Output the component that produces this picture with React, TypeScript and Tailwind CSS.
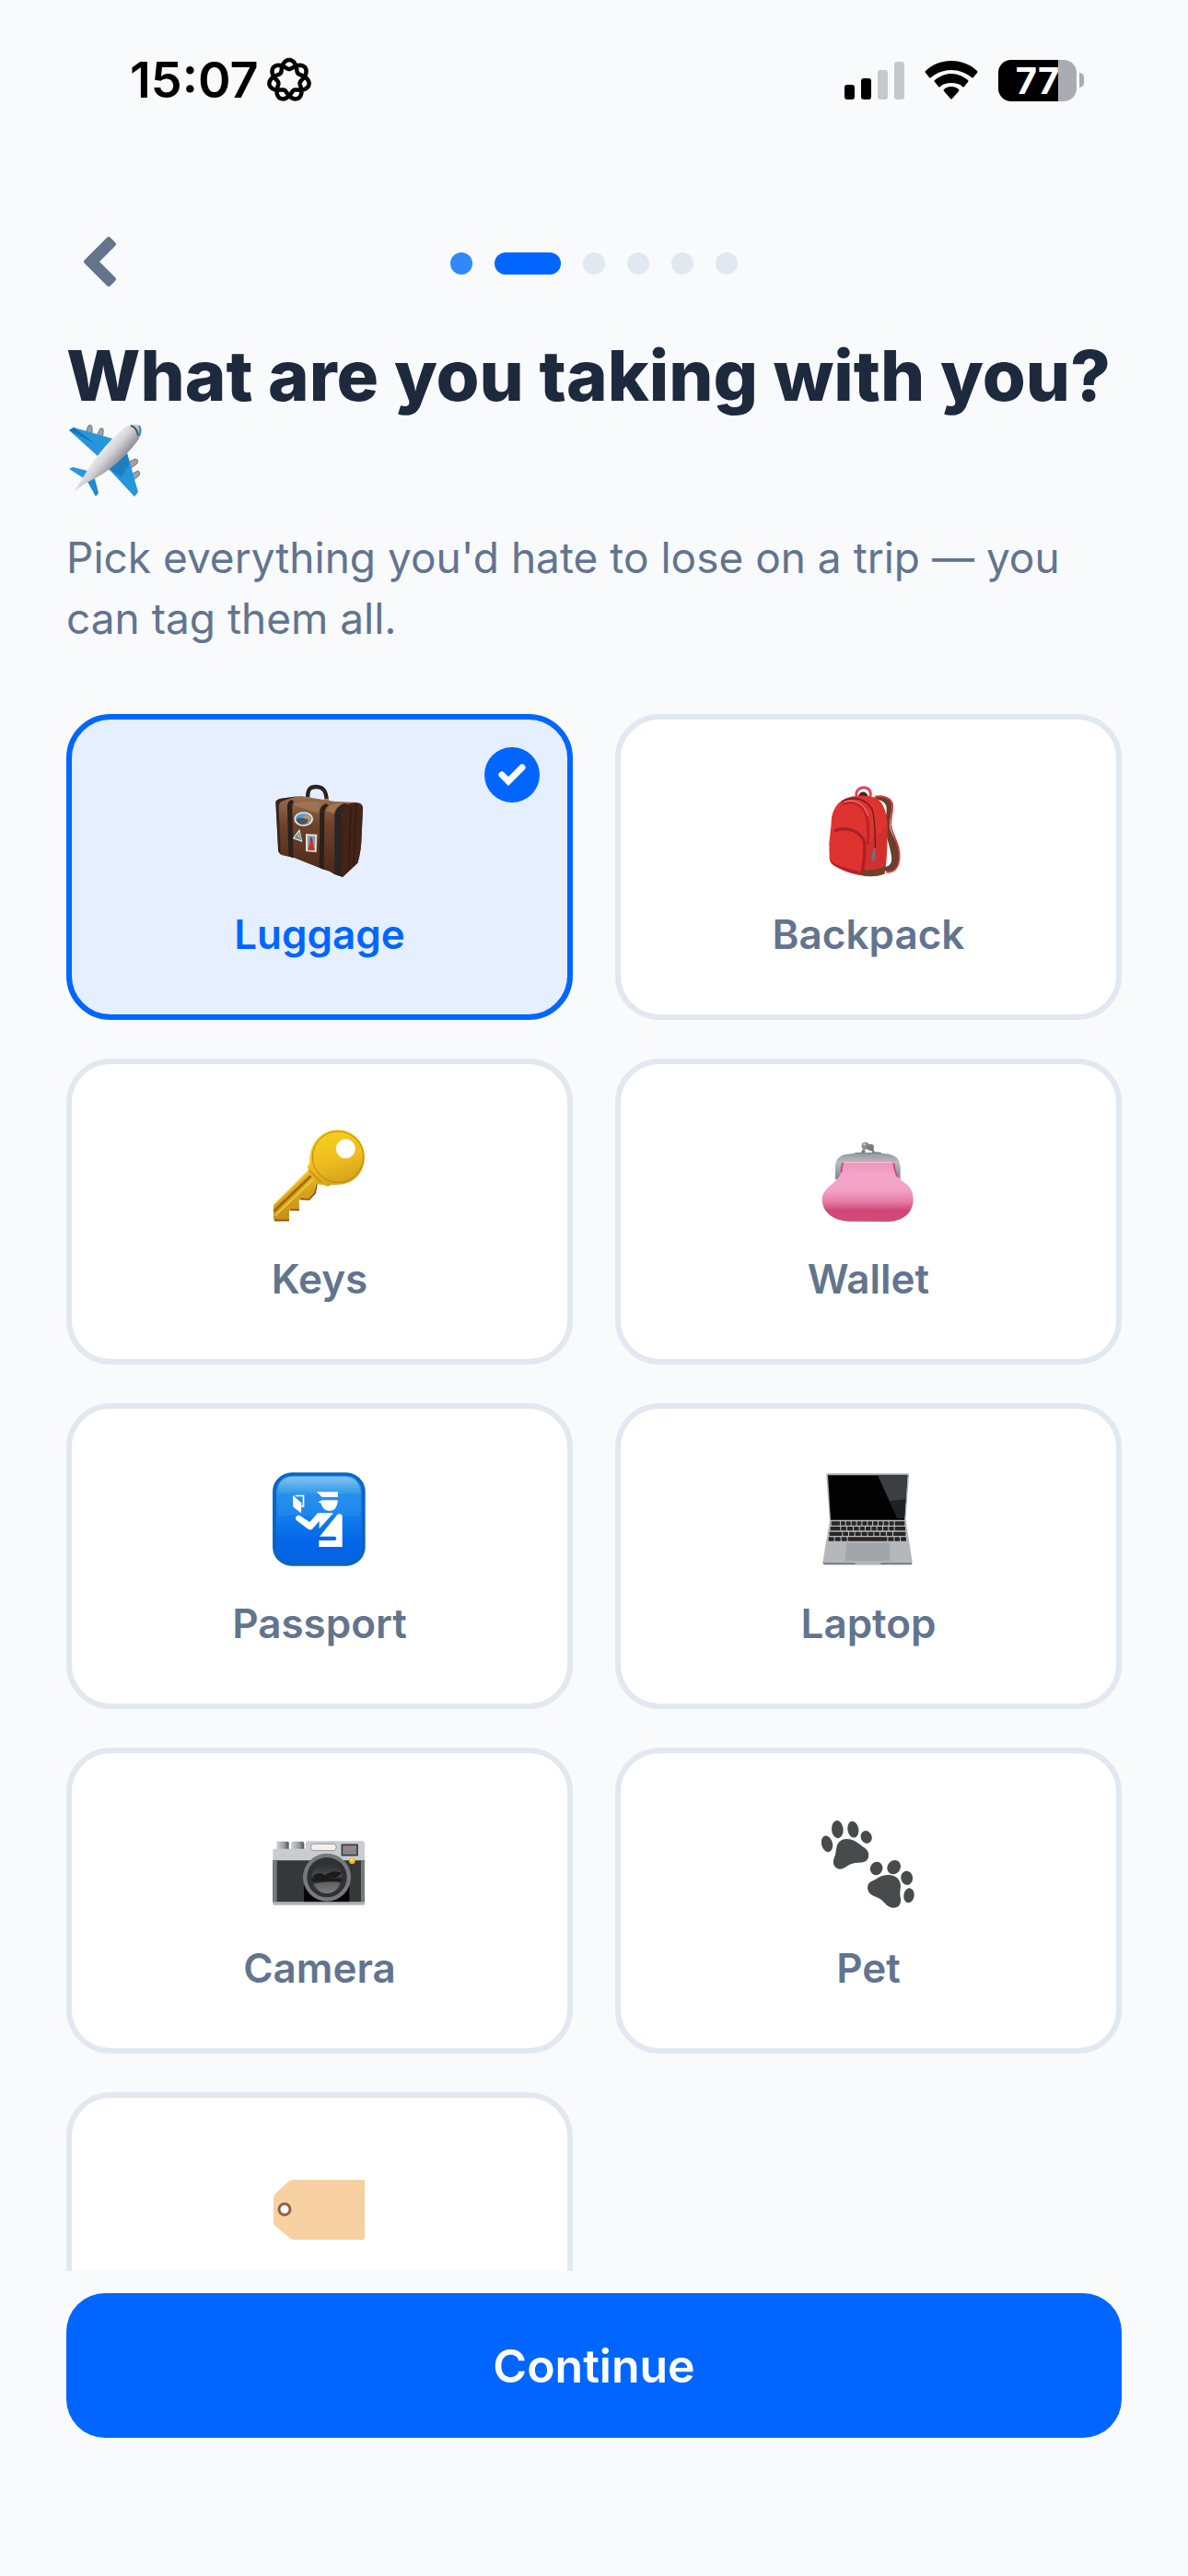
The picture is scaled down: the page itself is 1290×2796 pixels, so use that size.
import clsx from "clsx";
import { useState, type ComponentType } from "react";

type IconProps = { className?: string };

function Airplane({ className }: IconProps) {
  return (
    <svg viewBox="0 0 84 84" className={className} aria-hidden="true">
      <defs>
        <linearGradient id="plane-body" x1="0.25" y1="0.3" x2="0.7" y2="0.7">
          <stop offset="0.2" stopColor="#f4f4f5" />
          <stop offset="0.5" stopColor="#d4d4d8" />
          <stop offset="0.85" stopColor="#85868b" />
        </linearGradient>
      </defs>
      <g fill="#a1a1aa" stroke="#71717a">
        <path d="M21 12 L24 4 Q28 2 28 7 L28 15Z" />
        <path d="M33 15 L37 7 Q41 6 40 11 L39 19Z" />
        <path d="M67 44 L75 40 Q79 41 77 45 L69 51Z" />
        <path d="M70 57 L78 53 Q81 55 79 58 L72 64Z" />
      </g>
      <path d="M3 9 L8 6 L50 18 L34 37Z" fill="#2696dc" />
      <path d="M3 9 L8 6 L32 24Z" fill="#1674b8" />
      <path d="M66 34 L78 76 L74 81 L46 51Z" fill="#2696dc" />
      <path d="M66 34 L69 45 L60 60 L46 51Z" fill="#1c7fc4" />
      <path d="M3 51 L7 49 L27 54 L22 63Z" fill="#2696dc" />
      <path d="M22 63 L30 58 L35 77 L32 81Z" fill="#2089d0" />
      <path d="M9 75 L22 54 Q38 28 62 7 Q73 0 80 4 Q84 10 77 21 Q58 46 32 61 Q22 65 9 75Z" fill="url(#plane-body)" />
      <path d="M70 4 Q77 6 78 15" fill="none" stroke="#52525b" strokeWidth="2" />
      <path d="M79 4 Q82 8 79 15" fill="none" stroke="#2696dc" strokeWidth="2" />
    </svg>
  );
}

function Luggage({ className }: IconProps) {
  return (
    <svg viewBox="48 30 306 306" className={className} aria-hidden="true">
      <defs>
        <linearGradient id="bag-front" x1="0" y1="0" x2="0" y2="1">
          <stop offset="0" stopColor="#9a6f4e" />
          <stop offset="0.35" stopColor="#6f432b" />
          <stop offset="1" stopColor="#472719" />
        </linearGradient>
      </defs>
      <path d="M163 82 C160 48 172 41 191 42 C213 43 224 55 224 90" fill="none" stroke="#2a211d" strokeWidth="13" />
      <path d="M156 75 l13 0 0 7 -13 0z M216 80 l14 0 0 8 -14 0z" fill="#b77845" />
      <path
        d="M58 91 Q60 83 76 80 L140 72 L250 90 L325 93 Q342 96 342 112 L338 200 Q337 250 325 290 L276 336 L248 326 L235 318 L210 310 L120 274 L80 265 Q68 261 66 248Z"
        fill="url(#bag-front)"
      />
      <path d="M275 120 Q280 97 315 94 Q342 94 342 112 L338 200 Q337 250 325 290 L276 336 L266 328Z" fill="#432417" />
      <path d="M303 108 L296 310 M320 98 L312 300" stroke="#2b1812" strokeWidth="3" fill="none" />
      <path d="M58 91 Q60 83 76 80 L134 72 Q96 82 78 89 Q68 95 68 110 L74 262 L67 252Z" fill="#302621" />
      <path d="M96 103 Q97 88 111 84 L117 90 Q111 98 112 112 L116 274 L100 268Z" fill="#2a201c" />
      <path d="M202 120 Q204 104 224 97 L230 103 Q218 111 217 128 L215 312 L200 304Z" fill="#2a201c" />
      <path d="M250 132 Q252 108 282 96 L294 98 Q276 110 274 134 L271 334 L250 326Z" fill="#292522" />
      <path d="M122 95 Q160 83 212 96 L201 104 L198 128 L116 102Z" fill="#a57c5a" opacity="0.7" />
      <path d="M229 108 Q240 95 274 95 Q254 105 249 128 L222 120Z" fill="#ae8057" opacity="0.7" />
      <ellipse cx="149" cy="147" rx="31" ry="23" fill="#e6ecec" />
      <ellipse cx="149" cy="147" rx="26" ry="19" fill="#4f9fdc" />
      <path d="M124 150 Q130 138 145 144 L158 133 Q172 138 174 151 Q150 178 124 150Z" fill="#c6935b" />
      <path d="M125 149 Q132 139 148 144 L164 148 Q162 165 146 165 Q130 162 125 149Z" fill="#50545a" />
      <path d="M136 179 L145 222 L113 210Z" fill="#dfe4e1" />
      <path d="M135 188 L141 216 L119 208Z" fill="#3e80b8" />
      <path d="M127 203 l7 -11 3 20z" fill="#e0ad48" />
      <path d="M156 195 L193 197 L191 255 L156 252Z" fill="#dedfd8" />
      <path d="M162 201 L187 203 L185 250 L162 247Z" fill="#8599b2" />
      <path d="M169 228 l2 -20 6 0 3 20 5 21 -22 -1z" fill="#d32f25" />
      <path d="M170 218 l3 -14 4 14z" fill="#5f4438" />
    </svg>
  );
}

function Backpack({ className }: IconProps) {
  return (
    <svg viewBox="156 90 306 306" className={className} aria-hidden="true">
      <path
        d="M318 140 C350 128 385 135 386 165 C386 185 378 205 378 225 C380 265 410 275 409 330 C409 370 390 383 362 376 L362 362 C382 362 386 345 384 330 C381 295 365 270 364 225 C364 195 372 180 366 162 C360 148 340 142 330 146Z"
        fill="#6b3f29"
      />
      <path
        d="M330 134 C360 128 388 140 388 165 C388 185 381 205 382 225 C384 262 411 277 410 330 C409 367 390 385 366 379"
        fill="none"
        stroke="#d63c46"
        strokeWidth="5"
      />
      <path d="M270 132 C266 105 295 99 310 110 Q318 118 315 134" fill="none" stroke="#e0455c" strokeWidth="9" />
      <path d="M276 134 C280 114 302 113 309 135Z" fill="#46221c" />
      <path
        d="M188 222 C188 166 222 137 262 133 Q300 126 330 137 C360 150 370 190 371 230 L370 290 Q369 345 361 384 Q325 398 285 390 Q240 380 205 362 Q182 352 182 335 L181 285Z"
        fill="#df332f"
      />
      <path d="M304 290 L336 260 L370 230 L370 290 Q369 345 361 384 L290 390Z" fill="#c92c30" opacity="0.5" />
      <path d="M225 158 C262 142 294 162 304 200 Q310 235 307 290" fill="none" stroke="#b5242b" strokeWidth="9" />
      <path d="M228 152 C265 139 296 158 308 196" fill="none" stroke="#ec6d73" strokeWidth="4" />
      <path d="M222 150 C262 129 300 142 319 172 Q332 200 331 300" fill="none" stroke="#5c201b" strokeWidth="4" />
      <path d="M198 246 C235 228 284 246 296 282 Q300 320 287 388" fill="none" stroke="#a92126" strokeWidth="10" />
      <path d="M190 262 C220 242 272 250 287 286 Q293 322 282 378 Q225 370 187 342Z" fill="#df332f" />
      <path d="M184 335 Q190 351 217 360 L282 378 L281 390 Q235 381 203 362 Q184 352 184 335Z" fill="#b0252a" />
      <path d="M293 372 Q330 377 364 360 L361 386 Q325 399 284 390Z" fill="#6f4228" />
      <path d="M324 304 Q332 300 333 310 L331 340 Q324 347 318 341Z" fill="#6d7175" />
    </svg>
  );
}

function Key({ className }: IconProps) {
  return (
    <svg viewBox="78 102 306 306" className={className} aria-hidden="true">
      <defs>
        <linearGradient id="key-gold" x1="0.3" y1="0" x2="0.6" y2="1">
          <stop offset="0" stopColor="#f9d423" />
          <stop offset="0.4" stopColor="#eebd1f" />
          <stop offset="1" stopColor="#b97f16" />
        </linearGradient>
      </defs>
      <path
        fillRule="evenodd"
        d="M290 109 C340 109 378 148 378 197 C378 249 340 287 292 287 L266 289 Q258 297 248 289 L222 286 L216 291 L216 315 L197 336 L168 334 L164 340 L165 370 L135 369 L132 377 L132 401 L127 405 L84 404 L81 400 L81 354 L195 239 L191 229 L199 219 C196 151 239 109 290 109Z M316 139 A31 31 0 1 0 316 202 A31 31 0 1 0 316 139Z"
        fill="url(#key-gold)"
      />
      <circle cx="291" cy="197" r="83" fill="none" stroke="#b98615" strokeWidth="3" />
      <path d="M82 374 L203 259" stroke="#9b6811" strokeWidth="8" />
      <path d="M86 388 L211 270" stroke="#f2cc42" strokeWidth="5" />
      <path d="M81 354 L198 240" stroke="#f6d64c" strokeWidth="4" />
      <path d="M222 286 L216 315 L197 336 L168 334 M165 370 L135 369 M132 404 L84 404" fill="none" stroke="#86530e" strokeWidth="5" />
      <path d="M196 239 L235 278" stroke="#c28a16" strokeWidth="4" />
    </svg>
  );
}

function Purse({ className }: IconProps) {
  return (
    <svg viewBox="96 72 306 306" className={className} aria-hidden="true">
      <defs>
        <linearGradient id="purse-pink" x1="0" y1="0" x2="0" y2="1">
          <stop offset="0" stopColor="#eb93b6" />
          <stop offset="0.25" stopColor="#f6a5ca" />
          <stop offset="0.5" stopColor="#f3a0c5" />
          <stop offset="0.68" stopColor="#e67ba5" />
          <stop offset="0.82" stopColor="#cf4674" />
          <stop offset="1" stopColor="#d04b79" />
        </linearGradient>
        <linearGradient id="purse-metal" x1="0" y1="0" x2="0" y2="1">
          <stop offset="0" stopColor="#929aa0" />
          <stop offset="0.35" stopColor="#b8bec2" />
          <stop offset="1" stopColor="#7c848a" />
        </linearGradient>
      </defs>
      <path d="M202 158 L206 153 L224 153 L231 141 L240 147 L237 153 L262 153 L256 143 L264 140 L270 151 L290 152 L293 160Z" fill="#7c8388" />
      <circle cx="239" cy="131" r="12" fill="#858b90" />
      <circle cx="256" cy="136" r="11" fill="#757b80" />
      <circle cx="236" cy="127" r="4" fill="#c5c9cc" />
      <path d="M141 240 L141 196 C143 166 165 156 205 156 L300 156 C338 159 350 172 353 202 L353 241Z" fill="url(#purse-metal)" />
      <path
        d="M167 179 L324 178 Q331 182 333 194 C338 224 350 241 370 254 C388 266 396 286 395 310 C393 350 361 377 315 378 L182 377 C128 373 99 343 98 306 C98 278 122 263 142 245 C160 230 162 211 163 191Z"
        fill="url(#purse-pink)"
      />
      <path d="M160 218 Q162 200 165 186 M332 188 Q335 220 345 233" fill="none" stroke="#cf4c7d" strokeWidth="6" />
      <path d="M168 185 L326 185" stroke="#e5cad7" strokeWidth="4" />
    </svg>
  );
}

function PassportControl({ className }: IconProps) {
  return (
    <svg viewBox="78 57 306 306" className={className} aria-hidden="true">
      <defs>
        <linearGradient id="sign-blue" x1="0" y1="0" x2="0" y2="1">
          <stop offset="0" stopColor="#2e97e8" />
          <stop offset="0.45" stopColor="#1280ee" />
          <stop offset="0.75" stopColor="#0467e9" />
          <stop offset="1" stopColor="#0363e2" />
        </linearGradient>
        <linearGradient id="sign-shine" x1="0" y1="0" x2="0" y2="1">
          <stop offset="0" stopColor="#84c3f4" />
          <stop offset="1" stopColor="#2f98e6" />
        </linearGradient>
      </defs>
      <rect x="78" y="58" width="302" height="304" rx="62" fill="#0b64c4" />
      <rect x="90" y="68" width="278" height="282" rx="52" fill="url(#sign-blue)" />
      <path d="M94 128 C94 88 112 72 146 71 L314 71 C346 72 362 90 364 128Z" fill="url(#sign-shine)" />
      <path d="M94 126 H364 V198 H94Z" fill="#3093ef" opacity="0.4" />
      <g fill="#fff">
        <path d="M221 121 L291 121 L291 138 L239 138Z" />
        <path d="M226 154 L239 148 L290 148 L290 154 Q286 183 263 183 Q240 180 236 158Z" />
        <path d="M144 132 L172 157 L171 190 L145 170Z" />
        <path d="M152 131 h29 v39 h-9 v-6 h4 v-28 h-24z" />
        <path d="M153 205 Q157 194 168 199 L199 219 L225 190 L276 190 L230 241 L230 216 L207 242 Q200 247 192 241 L156 214Q152 210 153 205Z" />
        <path d="M231 266 L287 197 Q296 186 305 198 L305 300 L229 300 L229 279 L282 279 Q290 273 282 266Z" />
      </g>
    </svg>
  );
}

const KEY_ROWS = [
  { y: 247, keys: [128, 159, 176, 194, 212, 229, 247, 264, 282, 299, 317, 335], last: 367 },
  { y: 264, keys: [125, 160, 180, 201, 221, 240, 259, 278, 297, 316, 335], last: 369 },
  { y: 281, keys: [122, 166, 186, 206, 227, 248, 268, 288, 309, 330], last: 370 },
  { y: 298, keys: [119, 140, 161, 182, 313, 334, 354], last: 372 },
];

function LaptopComputer({ className }: IconProps) {
  return (
    <svg viewBox="96 87 306 306" className={className} aria-hidden="true">
      <path d="M112 96 Q112 91 118 91 L375 91 Q381 91 381 97 L370 245 L123 245Z" fill="#a7acb2" />
      <path d="M117 97 L376 97 L366 242 L126 242Z" fill="#020202" />
      <path d="M279 97 L376 97 L366 236 L343 236Z" fill="#3c3f42" />
      <path d="M318 180 L370 175 L366 236 L343 236Z" fill="#202124" />
      <path d="M123 243 L371 243 L392 380 Q392 387 386 388 L106 388 Q100 387 100 380Z" fill="#b4b8bd" />
      {KEY_ROWS.map((row) =>
        row.keys.map((x, i) => (
          <rect key={`${row.y}-${x}`} x={x} y={row.y} width={(row.keys[i + 1] ?? row.last + 3) - x - 3} height="13" rx="2" fill="#2a2623" />
        ))
      )}
      <path d="M177 317 L317 317 L320 376 L173 376Z" fill="#a0a5aa" />
      <path d="M101 382 L204 382 L208 387 L286 387 L291 382 L391 382 L389 388 L103 388Z" fill="#777c83" />
    </svg>
  );
}

function PhotoCamera({ className }: IconProps) {
  return (
    <svg viewBox="78 6 306 306" className={className} aria-hidden="true">
      <defs>
        <linearGradient id="camera-lens" x1="0" y1="0" x2="0" y2="1">
          <stop offset="0" stopColor="#2d2e30" />
          <stop offset="0.45" stopColor="#4a4b4d" />
          <stop offset="0.55" stopColor="#161617" />
          <stop offset="1" stopColor="#85878a" />
        </linearGradient>
        <linearGradient id="camera-dial">
          <stop offset="0" stopColor="#cfd1d4" />
          <stop offset="0.6" stopColor="#9b9da0" />
          <stop offset="1" stopColor="#505254" />
        </linearGradient>
      </defs>
      <path d="M91 90 Q91 86 96 86 L126 86 Q131 86 131 91 L131 114 L91 114Z" fill="url(#camera-dial)" />
      <path d="M138 95 Q138 86 146 86 L173 86 Q181 86 181 95 L181 114 L138 114Z" fill="url(#camera-dial)" />
      <path d="M79 114 Q79 110 84 110 L186 110 L186 90 Q186 85 192 85 L372 85 Q378 86 378 92 L378 150 L79 150Z" fill="#c9ccd1" />
      <path d="M79 148 H378 V284 H79Z" fill="#363738" />
      <path d="M79 148 H92 V284 H79Z M366 148 H378 V284 H366Z" fill="#77797c" />
      <path d="M180 180 H328 V284 H180Z" fill="#050505" />
      <path d="M79 283 H378 V290 Q378 293 374 293 H83 Q79 293 79 290Z" fill="#aeb1b6" />
      <rect x="203" y="94" width="82" height="22" rx="9" fill="#f4f0e8" stroke="#989a9d" strokeWidth="3" />
      <rect x="304" y="97" width="50" height="34" fill="#85878c" stroke="#3b3c3e" strokeWidth="5" />
      <path d="M310 117 L326 107 L348 107" fill="none" stroke="#b78278" strokeWidth="5" />
      <circle cx="255" cy="203" r="78" fill="#77797c" />
      <circle cx="255" cy="203" r="65" fill="#303133" />
      <circle cx="255" cy="205" r="50" fill="url(#camera-lens)" />
      <path d="M207 202 Q226 181 249 196 Q274 176 303 188 Q290 207 270 205 Q240 216 207 202Z" fill="#1b1b1c" />
      <path d="M211 224 Q255 215 298 219 Q287 250 255 253 Q227 249 211 224Z" fill="#747679" opacity="0.7" />
      <circle cx="337" cy="149" r="10" fill="#f5b91d" />
      <circle cx="336" cy="146" r="4" fill="#fde08b" />
    </svg>
  );
}

function PawPrints({ className }: IconProps) {
  return (
    <svg viewBox="66 36 306 306" className={className} fill="#484b4b" aria-hidden="true">
      <ellipse cx="84" cy="124" rx="18" ry="27" transform="rotate(-14 84 124)" />
      <ellipse cx="118" cy="77" rx="19" ry="29" transform="rotate(-5 118 77)" />
      <ellipse cx="169" cy="77" rx="18" ry="27" transform="rotate(-10 169 77)" />
      <ellipse cx="212" cy="102" rx="18" ry="21" transform="rotate(-20 212 102)" />
      <path d="M147 108 C176 108 188 126 207 137 C226 149 224 180 201 184 C186 187 177 184 162 190 C148 195 139 208 124 206 C105 202 101 185 108 168 C113 157 113 145 116 132 C120 117 132 108 147 108Z" />
      <ellipse cx="245" cy="204" rx="20" ry="22" transform="rotate(20 245 204)" />
      <ellipse cx="302" cy="200" rx="21" ry="24" transform="rotate(35 302 200)" />
      <ellipse cx="344" cy="235" rx="19" ry="23" transform="rotate(-8 344 235)" />
      <ellipse cx="351" cy="292" rx="17" ry="24" transform="rotate(8 351 292)" />
      <path d="M283 225 C309 225 324 241 324 262 C323 277 320 286 324 302 C326 321 317 333 299 332 C280 331 273 316 262 307 C251 298 241 297 231 291 C212 280 211 254 229 246 C248 239 259 225 283 225Z" />
    </svg>
  );
}

function LabelTag({ className }: IconProps) {
  return (
    <svg viewBox="0 0 102 102" className={className} aria-hidden="true">
      <path
        fillRule="evenodd"
        d="M22 20 H99 Q100 20 100 21 V83 Q100 85 98 85 H24 Q20 85 16 81 L3 70 Q1 68 1 66 V39 Q1 37 3 35 L17 22 Q19 20 22 20Z M13 47 A5 5 0 1 0 13 57 A5 5 0 1 0 13 47Z"
        fill="#f7d1a1"
      />
      <circle cx="13" cy="52" r="6" fill="none" stroke="#8d6144" strokeWidth="3" />
    </svg>
  );
}

// closed rosette with seven overlapping petals
const ROSETTE = Array.from({ length: 281 }, (_, i) => {
  const t = (i / 280) * Math.PI * 4;
  const r = 17 + 5 * Math.cos(3.5 * t);
  return `${i ? "L" : "M"}${(25 + r * Math.sin(t)).toFixed(2)} ${(25 - r * Math.cos(t)).toFixed(2)}`;
}).join("");

function StatusBar() {
  return (
    <div className="flex h-[68px] items-center justify-between pr-[113px] pl-[141px]">
      <div className="flex items-center gap-2">
        <span className="text-[54px] leading-[68px] font-semibold text-black">15:07</span>
        <svg viewBox="0 0 50 50" className="size-[50px]" fill="none" stroke="#000" strokeWidth="4.5" aria-hidden="true">
          <path d={ROSETTE} />
        </svg>
      </div>
      <div className="flex items-center gap-[22px]">
        <svg viewBox="0 0 65 42" className="h-[42px] w-[65px]" aria-hidden="true">
          <rect x="0" y="26" width="11" height="16" rx="3" />
          <rect x="18" y="19" width="11" height="23" rx="3" />
          <rect x="36" y="10" width="11" height="32" rx="3" fill="#c6c8cc" />
          <rect x="54" y="1" width="11" height="41" rx="3" fill="#c6c8cc" />
        </svg>
        <svg viewBox="0 0 58 42" className="h-[42px] w-[58px]" aria-hidden="true">
          <path d="M29 0 C40 0 50 4 57 11 Q58 12 57 13 L53 18 Q52 19 51 18 C45 13 37 10 29 10 C21 10 13 13 7 18 Q6 19 5 18 L1 13 Q0 12 1 11 C8 4 18 0 29 0Z" />
          <path d="M29 14 C36 14 42 17 47 21 Q48 22 47 23 L43 28 Q42 29 41 28 C38 25 34 24 29 24 C24 24 20 25 17 28 Q16 29 15 28 L11 23 Q10 22 11 21 C16 17 22 14 29 14Z" />
          <path d="M29 28 C32 28 35 29 37 31 Q38 32 37 33 L30 41 Q29 42 28 41 L21 33 Q20 32 21 31 C23 29 26 28 29 28Z" />
        </svg>
        <div className="flex items-center gap-[3px]">
          <div className="flex h-[45px] w-[85px] items-center justify-center rounded-[14px] bg-linear-to-r from-black from-[76%] to-[#a9adb3] to-[76%]">
            <span className="text-[40px] leading-[45px] font-bold text-white">77</span>
          </div>
          <div className="h-4 w-[5px] rounded-r-full bg-[#a9adb3]" />
        </div>
      </div>
    </div>
  );
}

function Progress() {
  return (
    <div className="flex items-center gap-6" role="progressbar" aria-valuemin={1} aria-valuemax={6} aria-valuenow={2}>
      <span className="size-6 rounded-full bg-[#2f89fb]" />
      <span className="h-6 w-[72px] rounded-full bg-[#0066ff]" />
      {[3, 4, 5, 6].map((step) => (
        <span key={step} className="size-6 rounded-full bg-slate-200" />
      ))}
    </div>
  );
}

type Item = { id: string; label?: string; Icon: ComponentType<IconProps> };

const ITEMS: Item[] = [
  { id: "luggage", label: "Luggage", Icon: Luggage },
  { id: "backpack", label: "Backpack", Icon: Backpack },
  { id: "keys", label: "Keys", Icon: Key },
  { id: "wallet", label: "Wallet", Icon: Purse },
  { id: "passport", label: "Passport", Icon: PassportControl },
  { id: "laptop", label: "Laptop", Icon: LaptopComputer },
  { id: "camera", label: "Camera", Icon: PhotoCamera },
  { id: "pet", label: "Pet", Icon: PawPrints },
  { id: "other", Icon: LabelTag },
];

function ItemCard({ item, selected, onToggle }: { item: Item; selected: boolean; onToggle: () => void }) {
  const { id, label, Icon } = item;
  return (
    <button
      type="button"
      aria-label={label ?? id}
      aria-pressed={selected}
      onClick={onToggle}
      className={clsx(
        "relative flex h-[332px] flex-col items-center justify-center gap-[26px] rounded-[48px] border-6",
        selected ? "border-[#0066ff] bg-[#e5efff] text-[#0066ff]" : "border-slate-200 bg-white text-slate-500"
      )}
    >
      <span className="flex h-[120px] items-center">
        <Icon className="size-[102px]" />
      </span>
      <span className="h-[54px] text-[44px] leading-[54px] font-semibold">{label}</span>
      {selected && (
        <span className="absolute top-[30px] right-[30px] flex size-[60px] items-center justify-center rounded-full bg-[#0066ff]">
          <svg viewBox="0 0 30 24" className="h-6 w-[30px]" aria-hidden="true">
            <path d="M4 12 L11 19 L26 4" fill="none" stroke="#fff" strokeWidth="7" strokeLinecap="round" />
          </svg>
        </span>
      )}
    </button>
  );
}

export default function App() {
  const [selected, setSelected] = useState<string[]>(["luggage"]);

  const toggle = (id: string) =>
    setSelected((prev) => (prev.includes(id) ? prev.filter((s) => s !== id) : [...prev, id]));

  return (
    <div className="flex h-screen flex-col bg-slate-50 pt-[53px] font-['Inter',sans-serif]">
      <StatusBar />
      <header className="mt-32 grid h-[72px] grid-cols-[1fr_auto_1fr] items-center px-[72px]">
        <button type="button" aria-label="Back" className="flex size-[74px] items-center justify-center pb-1">
          <svg viewBox="0 0 36 54" className="h-[54px] w-9" aria-hidden="true">
            <path
              d="M1 25 L25 1 Q27 -1 29 1 L34 6 Q36 8 34 10 L17 27 L34 44 Q36 46 34 48 L29 53 Q27 55 25 53 L1 29 Q-1 27 1 25Z"
              fill="#64748b"
            />
          </svg>
        </button>
        <Progress />
      </header>
      <main className="min-h-0 flex-1 overflow-hidden px-[72px] pt-10">
        <h1 className="text-[76px] leading-[93px] font-extrabold text-slate-800">
          What are you taking with you? <Airplane className="inline-block size-[84px] align-[-14px]" />
        </h1>
        <p className="mt-[25px] text-[46px] leading-[66px] text-slate-500">
          Pick everything you'd hate to lose on a trip — you can tag them all.
        </p>
        <div className="mt-[71px] grid grid-cols-2 gap-x-[46px] gap-y-[42px]">
          {ITEMS.map((item) => (
            <ItemCard
              key={item.id}
              item={item}
              selected={selected.includes(item.id)}
              onToggle={() => toggle(item.id)}
            />
          ))}
        </div>
      </main>
      <footer className="px-[72px] pt-6 pb-[150px]">
        <button
          type="button"
          className="h-[157px] w-full rounded-[42px] bg-[#0066ff] text-[50px] leading-[60px] font-semibold text-white"
        >
          Continue
        </button>
      </footer>
    </div>
  );
}
